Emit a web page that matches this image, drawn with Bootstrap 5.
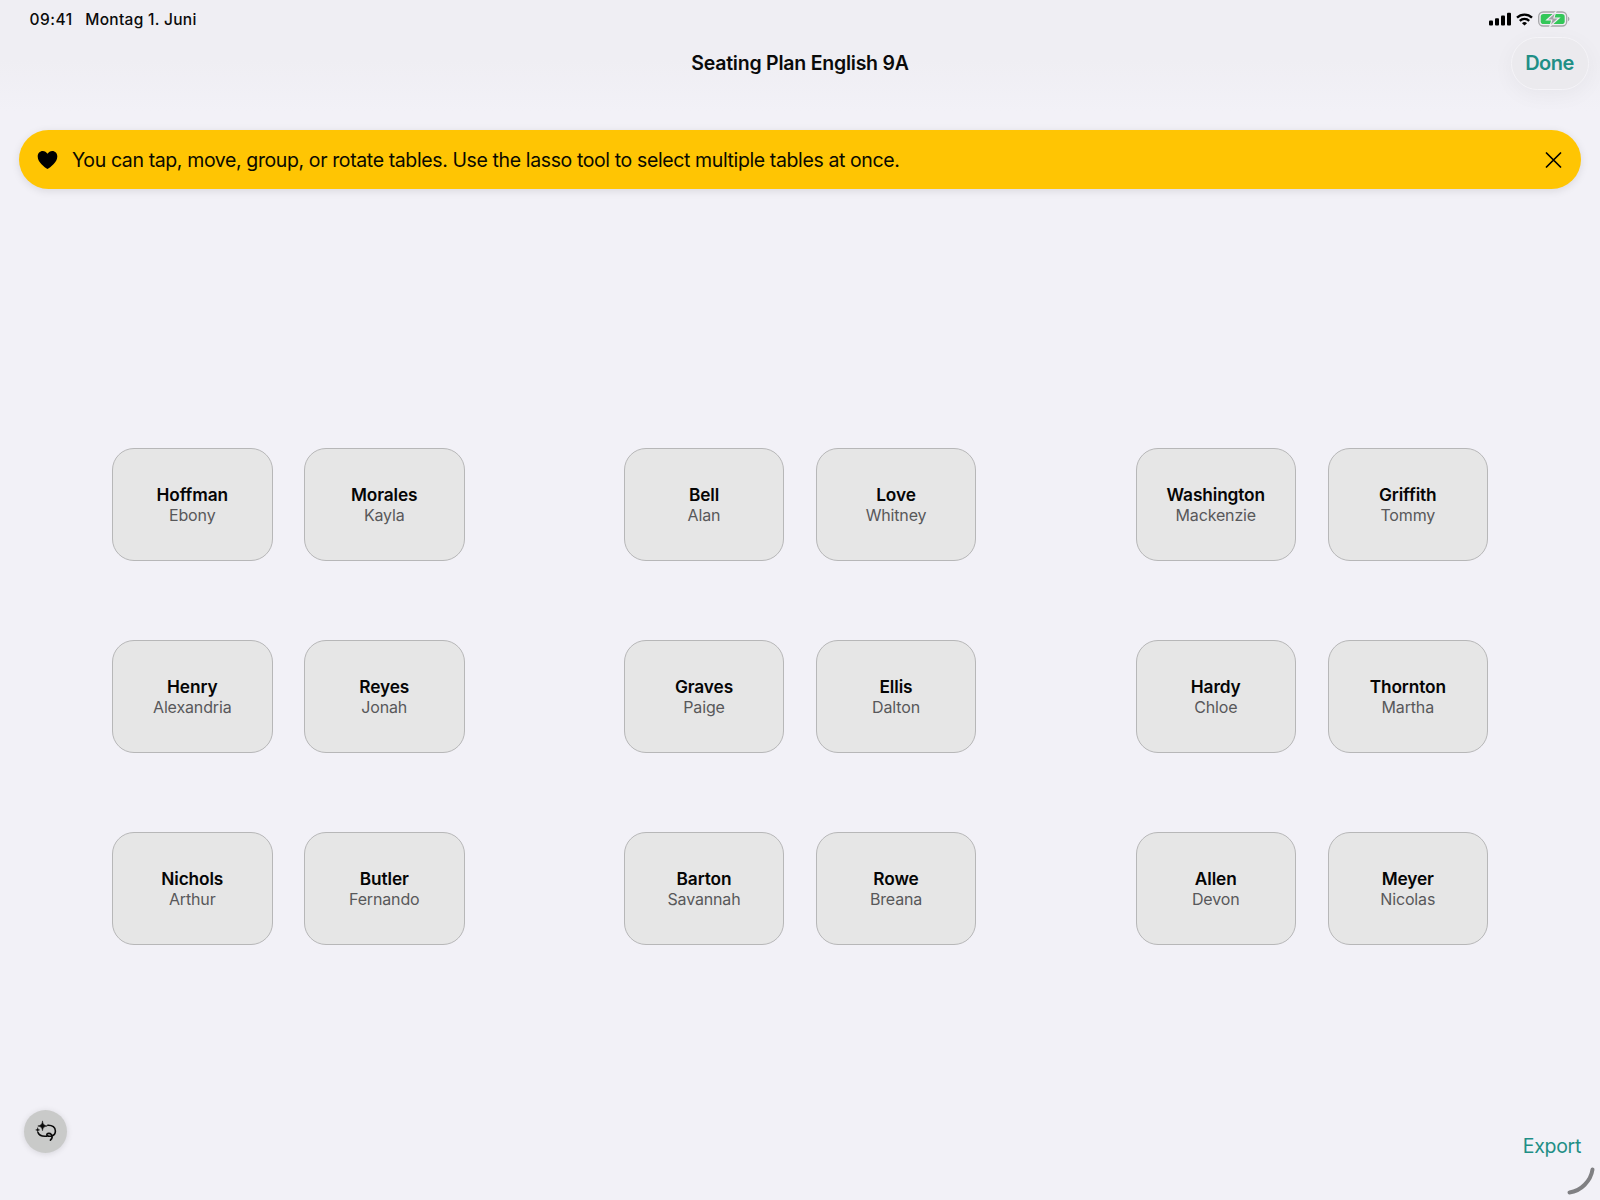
<!DOCTYPE html>
<html lang="en">
<head>
<meta charset="utf-8">
<title>Seating Plan English 9A</title>
<link href="https://cdn.jsdelivr.net/npm/bootstrap@5.3.0/dist/css/bootstrap.min.css" rel="stylesheet">
<script src="https://cdn.jsdelivr.net/npm/bootstrap@5.3.0/dist/js/bootstrap.bundle.min.js"></script>
<style>
  body { font-family: Inter, "Liberation Sans", sans-serif; background: #f2f1f7; color: #0a0a0a; }
  .screen { height: 1200px; background: linear-gradient(#efeef3 0, #efeef3 60px, #f2f1f7 112px); }
  .status-bar { height: 37px; padding: 1px 30px 0 29.5px; font-size: 15.5px; font-weight: 500; }
  .clock, .today { padding-top: 1px; }
  .clock { letter-spacing: .5px; }
  .today { letter-spacing: .3px; margin-left: 12.5px; }
  .signals { gap: 5px; }
  .title-bar { height: 53px; grid-template-columns: 1fr auto 1fr; padding: 0 11px; }
  .plan-title { font-size: 19.5px; font-weight: 600; letter-spacing: -.23px; }
  .done-btn { width: 78px; height: 53px; font-size: 20px; font-weight: 600; letter-spacing: -.5px; color: #1f8f86; background: #ebeaee; border: 1px solid #f5f4f8; box-shadow: 0 5px 22px rgba(0,0,0,.045); }
  .done-btn span { display: block; padding: 0 1px 2px 0; }
  .hint { margin: 40px 19px 0; height: 59px; padding: 0 19px 0 18px; border-radius: 30px; background: #ffc503; border: 0; box-shadow: 0 2px 8px rgba(0,0,0,.1); font-size: 19.5px; color: #0a0a00; }
  .hint-text { letter-spacing: -.385px; margin-left: 14px; padding-top: 2px; }
  .room { margin-top: 259px; padding: 0 112px; gap: 79px; }
  .pair { gap: 31.5px; }
  .desk { width: 160.5px; height: 113px; padding-top: 1px; border: 1px solid #b7b7b8; border-radius: 22px; background: #e6e6e6; }
  .surname { font-size: 17.3px; font-weight: 600; line-height: 20px; letter-spacing: -.12px; color: #050505; }
  .forename { font-size: 16px; line-height: 20px; letter-spacing: -.15px; color: #58585a; }
  .tools { height: 90px; margin-bottom: 24px; padding: 0 19px 0 24px; }
  .lasso-btn { width: 43px; height: 43px; background: #c9cac9; box-shadow: 0 1px 6px rgba(0,0,0,.12); }
  .export-btn { font-size: 19.5px; line-height: 30px; letter-spacing: -.3px; color: #1f8f86; margin-top: 30px; }
  .corner-mark { right: 4px; bottom: 4px; }
</style>
</head>
<body>
<div class="screen d-flex flex-column position-relative overflow-hidden">
  <header>
    <div class="status-bar d-flex align-items-center">
      <span class="clock">09:41</span>
      <span class="today">Montag 1. Juni</span>
      <div class="signals d-flex align-items-center ms-auto">
        <svg width="22" height="14" viewBox="0 0 22 14"><rect y="8.5" width="4" height="5" rx="1"/><rect x="6" y="6.3" width="4" height="7.2" rx="1"/><rect x="12" y="3.6" width="4" height="9.9" rx="1"/><rect x="18" y=".7" width="4" height="12.8" rx="1"/></svg>
        <svg width="17" height="13" viewBox="0 0 17 13" fill="none" stroke="#000" stroke-width="2.3"><path d="M1 4.6a10.7 10.7 0 0 1 15 0M3.8 7.9a6.7 6.7 0 0 1 9.4 0"/><path d="M8.500 12.600 6 10.200a3.600 3.600 0 0 1 5 0z" fill="#000" stroke="none"/></svg>
        <svg width="32" height="16" viewBox="0 0 32 16"><rect x=".7" y="1" width="28" height="14" rx="4.5" fill="none" stroke="#a6a6a8" stroke-width="1.3"/><path d="M30 5.800c1.900.7 1.900 3.700 0 4.400z" fill="#a6a6a8"/><rect x="2.7" y="3" width="24" height="10" rx="2.8" fill="#34c759"/><path d="M17.800.8 8.700 9h5.100l-2 6.500L21.200 7h-5.300z" fill="#a2a2a5" stroke="#efeef3" stroke-width="1.1"/></svg>
      </div>
    </div>
    <div class="title-bar d-grid align-items-center">
      <span></span>
      <h1 class="plan-title m-0">Seating Plan English 9A</h1>
      <button class="done-btn btn rounded-pill p-0 ms-auto"><span>Done</span></button>
    </div>
  </header>

  <div class="hint alert d-flex align-items-center mb-0" role="alert">
    <svg width="21" height="20" viewBox="0 0 21 20"><path d="M10.500 19C7.600 17.200.7 12.200.7 6.400.7 3.200 2.900.9 5.700.9c2 0 3.700 1 4.800 2.900C11.600 1.900 13.300.9 15.300.9c2.800 0 5 2.300 5 5.500 0 5.800-6.900 10.800-9.800 12.600z"/></svg>
    <span class="hint-text">You can tap, move, group, or rotate tables. Use the lasso tool to select multiple tables at once.</span>
    <svg class="ms-auto" width="17" height="16" viewBox="0 0 17 16" stroke="#000" stroke-width="1.7" stroke-linecap="round"><path d="M1.500 1l14 14M15.500 1l-14 14"/></svg>
  </div>

  <main class="room d-flex flex-column" id="room"></main>

  <footer class="tools d-flex align-items-center justify-content-between mt-auto">
    <button class="lasso-btn btn rounded-circle border-0 p-0 d-flex align-items-center justify-content-center">
      <svg width="22" height="22" viewBox="0 0 22 22" fill="none" stroke="#0a0a0a" stroke-width="1.6" stroke-linecap="round"><path d="M12.800 5.200c4.600-.2 7.600 2.300 7.600 5.800 0 2.600-1.400 4.300-3.700 5-2.500.7-5.100.1-4.900-1.400.2-1.500 3.200-1.800 4.500-.2 1.200 1.700.8 4.200-.9 5.800M3 12.600c.8 2.600 4 4 8.800 3.600"/><path d="M7.500 1.300c.5 3.200 1.500 4.200 4.700 4.700-3.200.5-4.200 1.500-4.700 4.700-.5-3.200-1.500-4.200-4.700-4.700 3.200-.5 4.200-1.500 4.700-4.700z" fill="#0a0a0a" stroke="#0a0a0a" stroke-width=".5"/><path d="M2.700 7.800l.6 1.500 1.500.6-1.500.6-.6 1.500-.6-1.500-1.500-.6 1.500-.6z" fill="#0a0a0a" stroke="#0a0a0a" stroke-width=".3"/></svg>
    </button>
    <a class="export-btn text-decoration-none" href="#">Export</a>
  </footer>
  <svg class="corner-mark position-absolute" width="30" height="30" viewBox="0 0 30 30" fill="none" stroke="#808083" stroke-width="4" stroke-linecap="round"><path d="M26.500 3.500C24.800 15 15 25 3.500 26.500"/></svg>
</div>
<script>
  const rows = [
    [["Hoffman","Ebony"],["Morales","Kayla"],["Bell","Alan"],["Love","Whitney"],["Washington","Mackenzie"],["Griffith","Tommy"]],
    [["Henry","Alexandria"],["Reyes","Jonah"],["Graves","Paige"],["Ellis","Dalton"],["Hardy","Chloe"],["Thornton","Martha"]],
    [["Nichols","Arthur"],["Butler","Fernando"],["Barton","Savannah"],["Rowe","Breana"],["Allen","Devon"],["Meyer","Nicolas"]]
  ];
  const desk = ([last, first]) => `<div class="desk d-flex flex-column align-items-center justify-content-center"><span class="surname">${last}</span><span class="forename">${first}</span></div>`;
  document.getElementById("room").innerHTML = rows.map(r =>
    `<div class="d-flex justify-content-between">${[0, 2, 4].map(i => `<div class="pair d-flex">${desk(r[i])}${desk(r[i + 1])}</div>`).join("")}</div>`
  ).join("");
</script>
</body>
</html>
